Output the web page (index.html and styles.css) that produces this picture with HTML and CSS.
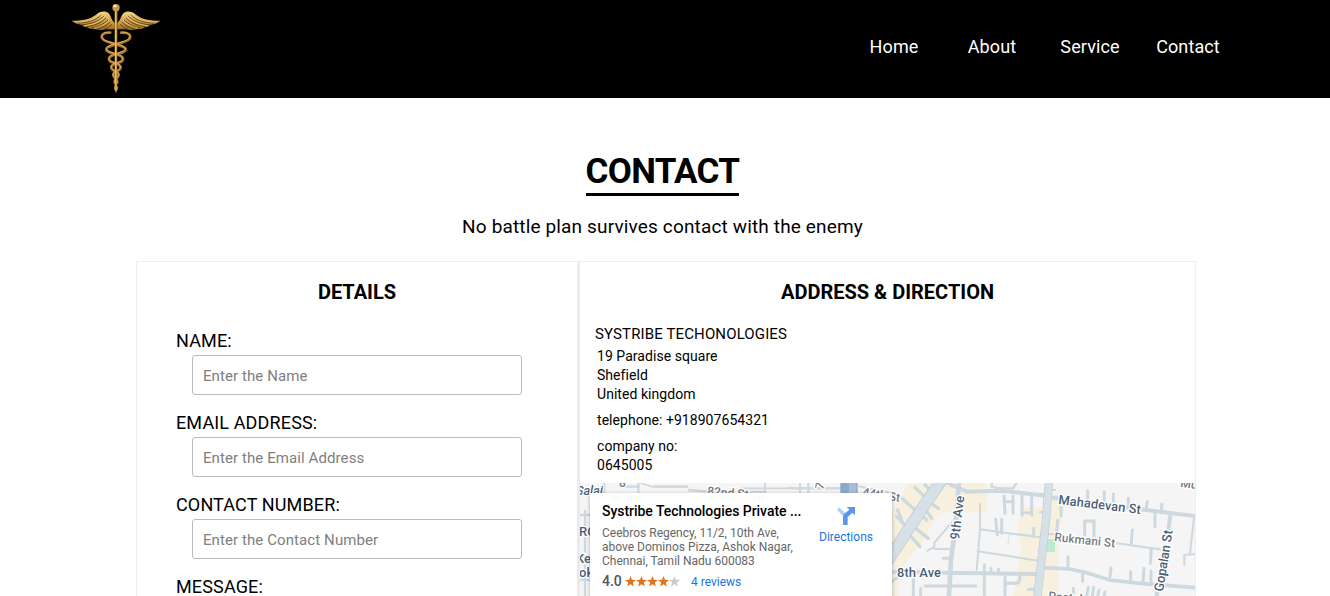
FILE: index.html
```html
<!DOCTYPE html>
<html lang="en">
<head>
<meta charset="utf-8">
<title>Contact</title>
<link rel="stylesheet" href="styles.css">
</head>
<body>
<header class="header">
  <svg class="logo" viewBox="0 0 330 300" aria-label="Caduceus logo">
    <defs>
      <linearGradient id="gold" x1="0" y1="0" x2="0" y2="1">
        <stop offset="0" stop-color="#f3d58a"/><stop offset=".55" stop-color="#cf9f45"/><stop offset="1" stop-color="#9a6a22"/>
      </linearGradient>
      <g id="wing">
        <path fill="url(#gold)" d="M35 62C67 62 90 58 108 44C120 33 136 31 146 40C153 47 152 58 164 69V88H139C128 92 116 90 108 88C94 88 84 85 82 82C72 81 67 77 65 74C54 73 42 68 35 62Z"/>
        <path fill="none" stroke="#3c260b" stroke-width="2.2" d="M52 69C83 70 108 59 122 46M66 74C94 73 116 63 131 49M80 80C106 77 125 67 138 54M95 84C117 80 132 72 144 60M113 87C130 83 142 75 150 66M130 89C141 85 149 79 156 73"/>
        <path fill="none" stroke="#ffe9ad" stroke-width="1.6" d="M48 66C82 67 107 56 120 43M74 77C99 75 119 65 134 51M102 84C122 80 136 72 147 62"/>
      </g>
    </defs>
    <use href="#wing"/>
    <use href="#wing" transform="translate(336 0) scale(-1 1)"/>
    <g fill="none" stroke-linecap="round">
      <g stroke="#a87429" stroke-width="8">
        <path d="M151 98C129 96 121 107 128 117C137 130 194 134 197 147C198 163 146 160 147 178C148 192 184 188 182 203C180 216 158 214 160 226C162 236 174 236 172 248"/>
        <path d="M183 98C207 96 215 107 208 117C199 130 142 134 139 147C138 163 190 160 189 178C188 192 152 188 154 203C156 216 178 214 176 226C174 236 162 236 164 248"/>
      </g>
      <g stroke="#e2b965" stroke-width="2.6">
        <path d="M149 97C129 95 120 107 127 115C136 129 193 132 196 145C197 161 145 158 146 176C147 190 183 186 181 201C179 214 157 212 159 224C161 234 173 234 171 246"/>
        <path d="M185 97C207 95 214 107 207 115C198 129 141 132 138 145C137 161 189 158 188 176C187 190 151 186 153 201C155 214 177 212 175 224C173 234 161 234 163 246"/>
      </g>
    </g>
    <path fill="#c89744" d="M164 33H172L171 265L168 282L164 265Z"/>
    <path fill="#f2d58e" d="M166 35H168L168 264H166Z"/>
    <circle cx="168" cy="23" r="11" fill="#c99a48"/><ellipse cx="165" cy="18" rx="5" ry="4" fill="#fff0be"/>
    <ellipse cx="168" cy="264" rx="5.5" ry="9" fill="#d5a551"/>
  </svg>
  <nav class="nav">
    <a>Home</a><a>About</a><a>Service</a><a>Contact</a>
  </nav>
</header>
<main class="main">
  <h1 class="title">CONTACT</h1>
  <p class="tagline">No battle plan survives contact with the enemy</p>
  <section class="card">
    <form class="details">
      <h2 class="heading">DETAILS</h2>
      <label class="label" for="name">NAME:</label>
      <input class="input" id="name" placeholder="Enter the Name">
      <label class="label" for="email">EMAIL ADDRESS:</label>
      <input class="input" id="email" placeholder="Enter the Email Address">
      <label class="label" for="number">CONTACT NUMBER:</label>
      <input class="input" id="number" placeholder="Enter the Contact Number">
      <label class="label">MESSAGE:</label>
    </form>
    <div class="direction">
      <h2 class="heading">ADDRESS &amp; DIRECTION</h2>
      <h3 class="company">SYSTRIBE TECHONOLOGIES</h3>
      <p class="address">19 Paradise square<br>Shefield<br>United kingdom</p>
      <p class="address">telephone: +918907654321</p>
      <p class="address">company no:<br>0645005</p>
      <div class="map">
        <svg class="streets" viewBox="580 483 615 113">
          <rect x="580" y="483" width="615" height="113" fill="#f5f5f5"/>
          <g transform="translate(575 480) scale(.33333)" fill="none" stroke="#cdd8df" stroke-width="7">
            <path d="M88 8V45M135 8V20H195M190 8V45M240 20H340M0 105H48M30 90V348M340 30L470 40M0 160H30M15 300H45"/>
            <path d="M195 8L230 20H330M500 25H800" stroke-width="5"/>
          </g>
          <g transform="translate(740 480) scale(.33333)">
            <path fill="#89a9cd" d="M301 8H353V42H301Z"/><path fill="#a7bdd7" d="M327 8H349V42H327Z"/>
            <path fill="none" stroke="#cdd8df" stroke-width="6" d="M0 35H75M75 8V45M180 8V40M205 8V40M140 25H300M353 18L455 40"/>
          </g>
          <g transform="translate(885 480) scale(.33333)">
            <path fill="#f8f0df" d="M70 8H305V97H175L145 125L105 195L40 278V348H0V220L20 100Z"/>
            <path fill="#f8f0df" d="M415 82L397 135L408 195L400 270L385 348H520V200L525 40H480L475 82Z"/>
            <g fill="none" stroke="#cdd8df" stroke-linecap="round">
              <path d="M90 22L120 52M120 15L145 40M115 80L140 115M128 63L160 85M100 95L125 120M50 55L90 90M35 110L65 140M38 90L50 120M65 155L105 200M85 140L130 175" stroke-width="10"/>
              <path d="M185 8L245 35L350 32L480 47" stroke-width="12"/>
              <path d="M320 8V20L340 25H385L395 8" stroke-width="7"/>
              <path d="M222 10L210 150L198 240L192 348" stroke-width="14"/>
              <path d="M0 275L180 278L470 282" stroke-width="12"/>
              <path d="M0 320L40 290L45 265M85 290V348M107 325V348M175 235H200M120 318H272M298 254V348M318 265V280M340 268V282M360 290V348M362 310H390Q405 310 405 290" stroke-width="9"/>
              <path d="M285 72L285 148L275 270M285 148L465 172M278 214L460 242M200 128L148 188V200L128 212M148 206L200 208" stroke-width="6"/>
              <path d="M357 48L360 100M384 48V100M411 48V106M440 50V105M360 65H385M411 98H440M332 118L337 165M350 118V160M446 145V168M430 328H460" stroke-width="9"/>
              <path d="M372 165L369 192" stroke="#e0e4e8" stroke-width="4"/>
            </g>
            <path fill="none" stroke="#bac8d4" stroke-width="36" d="M170 0L105 95L-20 285"/>
            <path fill="none" stroke="#d6e0e7" stroke-width="32" d="M170 0L105 95L-20 285"/>
          </g>
          <g transform="translate(1040 480) scale(.33333)">
            <path fill="#f8f0df" d="M30 45L75 50L68 110L52 180L48 265L42 348H0L10 150Z"/>
            <path fill="#bcebcf" d="M18 177H45V216H18Z"/>
            <g fill="none" stroke="#cdd8df" stroke-linecap="round">
              <path d="M0 45H20M30 52L300 88L465 108" stroke-width="12"/>
              <path d="M0 262L90 267L140 278L210 300L300 310L465 323" stroke-width="11"/>
              <path d="M390 110L384 160M355 310L350 348" stroke-width="12"/>
              <path d="M143 32V60M193 35V65M220 42V70M265 55V78M322 65L318 90M365 72V98M345 95V140M277 150L274 190M334 205L331 250M63 80V108M53 120L50 155M84 230V260M128 280V304M213 263L210 290M272 275V303M312 265L309 308M333 272V308M300 85L308 90M100 325V348M145 322L140 348M161 322L157 348M177 330L173 348M195 335L192 348M134 165V123H162V170" stroke-width="9"/>
              <path d="M230 190L360 208M20 163H45M30 30H45M0 97H15M462 112L450 220M465 222L433 225V255" stroke-width="6"/>
            </g>
            <path fill="none" stroke="#bac8d4" stroke-width="25" d="M27 0L18 120L-8 348"/>
            <path fill="none" stroke="#d6e0e7" stroke-width="22" d="M27 0L18 120L-8 348"/>
          </g>
          <g class="street-label">
            <text x="576" y="495" textLength="27" font-style="italic">Salai</text>
            <text x="707" y="495" class="minor" transform="rotate(5 707 495)">82nd St</text>
            <text x="823" y="490" class="minor" transform="rotate(-75 823 490)">7</text>
            <text x="862" y="496" class="minor" transform="rotate(9 862 496)" textLength="38">44th St</text>
            <text x="619" y="487" class="minor">8</text>
            <text x="579" y="536">RO</text><text x="576" y="563">Ke</text><text x="579" y="577">ok</text>
            <text x="886" y="546" class="teal">r</text>
            <text x="897" y="577" textLength="44">8th Ave</text>
            <text x="959" y="540" transform="rotate(-83 959 540)" textLength="44">9th Ave</text>
            <text x="1058" y="504" transform="rotate(7 1058 504)" textLength="83">Mahadevan St</text>
            <text x="1054" y="541" class="minor" transform="rotate(6 1054 541)" textLength="61">Rukmani St</text>
            <text x="1163" y="592" transform="rotate(-81 1163 592)" textLength="62">Gopalan St</text>
            <text x="1180" y="487" class="minor" transform="rotate(7 1180 487)">Mu</text>
            <text x="1048" y="600" class="minor" transform="rotate(5 1048 600)">Postal</text>
          </g>
        </svg>
        <div class="place">
          <div class="place-info">
            <div class="place-name">Systribe Technologies Private ...</div>
            <div class="place-address">Ceebros Regency, 11/2, 10th Ave,<br>above Dominos Pizza, Ashok Nagar,<br>Chennai, Tamil Nadu 600083</div>
            <div class="rating">
              <span class="score">4.0</span>
              <svg class="stars" viewBox="0 0 55 11">
                <defs><path id="star" d="M5.5 0L6.9 3.8L11 4L7.8 6.6L8.9 10.6L5.5 8.3L2.1 10.6L3.2 6.6L0 4L4.1 3.8Z"/></defs>
                <g fill="#e7711b"><use href="#star"/><use href="#star" x="11"/><use href="#star" x="22"/><use href="#star" x="33"/></g>
                <use href="#star" x="44" fill="#ccc"/>
              </svg>
              <a class="reviews">4 reviews</a>
            </div>
          </div>
          <div class="directions">
            <svg class="turn" viewBox="0 0 54 54">
              <path fill="#b3cffa" d="M0 8L7 1L28 22L20 30Z"/>
              <path fill="#5e97ea" d="M29 0H54V25L46 17L32 31V54H18V30Q18 24 22 20L37 8Z"/>
            </svg>
            <a>Directions</a>
          </div>
        </div>
      </div>
    </div>
  </section>
</main>
</body>
</html>
```

FILE: styles.css
```css
* { box-sizing: border-box; }
body {
  margin: 0;
  height: 596px;
  overflow: hidden;
  font-family: Roboto, "Liberation Sans", sans-serif;
  color: #000;
  background: #fff;
}
.header {
  height: 98px;
  display: flex;
  justify-content: space-between;
  padding: 0 93px 0 60px;
  background: #000;
}
.logo { width: 110px; height: 100px; margin-bottom: -2px; }
.nav {
  display: grid;
  grid-template-columns: repeat(4, 98px);
  height: 92px;
  align-items: center;
  text-align: center;
  color: #fff;
  font-size: 18px;
  letter-spacing: .1px;
}
.main { display: flex; flex-direction: column; align-items: center; }
.title {
  margin: 51px 5px 0 0;
  height: 47px;
  border-bottom: 3px solid #000;
  font-size: 35px;
  letter-spacing: -.65px;
  line-height: 46px;
  font-weight: 700;
}
.tagline {
  margin: 19px 5px 0 0;
  font-size: 19px;
  letter-spacing: .15px;
  line-height: 24px;
}
.card {
  display: grid;
  grid-template-columns: 440px 618px;
  width: 1060px;
  height: 335px;
  margin: 22px 0 0 2px;
  border: 1px solid #eee;
  border-bottom: 0;
  overflow: hidden;
}
.details { padding: 0 55px; display: flex; flex-direction: column; }
.direction { border-left: 3px solid #ebebeb; }
.heading {
  margin: 18px 0 0;
  text-align: center;
  font-size: 20px;
  line-height: 24px;
  font-weight: 700;
}
.details .heading { margin-bottom: 26px; }
.label { margin-left: -16px; font-size: 18px; letter-spacing: .14px; line-height: 22px; padding-bottom: 3px; }
.input {
  flex: none;
  width: 330px;
  height: 40px;
  margin-bottom: 17px;
  padding: 2px 10px 0;
  border: 1px solid #bbb;
  border-radius: 3px;
  font: 15px Roboto, sans-serif;
  letter-spacing: .09px;
}
.input::placeholder { color: #808080; }
.company { margin: 21px 0 4px 15px; font-size: 15px; letter-spacing: .13px; line-height: 18px; font-weight: 400; }
.address { margin: 0 0 7px 17px; font-size: 14px; letter-spacing: .05px; line-height: 19px; }
.map { position: relative; height: 113px; overflow: hidden; margin-top: 8px; }
.streets { display: block; width: 615px; height: 113px; }
.street-label text {
  font-family: Roboto, sans-serif;
  font-weight: 500;
  font-size: 13px;
  fill: #4a6076;
  stroke: #fff;
  stroke-width: 2.5px;
  paint-order: stroke;
}
.street-label .minor { fill: #75797e; font-size: 12px; }
.street-label .teal { fill: #1f9aa5; }
.place {
  position: absolute;
  top: 10px;
  left: 10px;
  width: 302px;
  height: 110px;
  padding: 9px 12px;
  display: flex;
  justify-content: space-between;
  background: #fff;
  box-shadow: 0 1px 4px rgba(0, 0, 0, .3);
}
.place-info { white-space: nowrap; }
.place-name { font-size: 14px; letter-spacing: -.04px; line-height: 18px; font-weight: 500; }
.place-address { margin-top: 6px; color: #666; font-size: 12px; line-height: 14px; }
.rating { display: flex; align-items: center; margin-top: 5px; height: 16px; font-size: 12px; }
.score { color: #555; font-size: 14px; font-weight: 500; width: 23px; }
.stars { width: 55px; height: 11px; }
.reviews { margin: 1px 0 0 11px; color: #1a73e8; }
.directions { display: flex; flex-direction: column; align-items: center; width: 70px; margin-right: -1px; font-size: 12px; line-height: 16px; color: #1a73e8; }
.turn { width: 18px; height: 18px; margin: 5px 0 4px; }
```
